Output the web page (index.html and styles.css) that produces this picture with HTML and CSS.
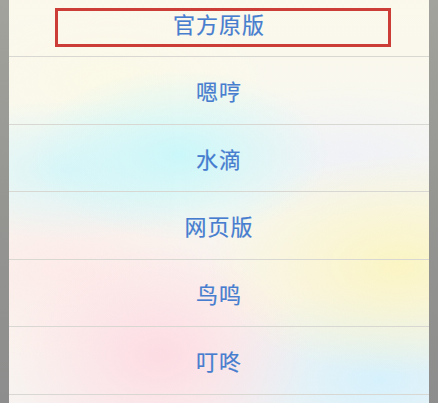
FILE: index.html
```html
<!DOCTYPE html>
<html lang="zh">
<head>
<meta charset="utf-8">
<link rel="stylesheet" href="styles.css">
</head>
<body>
<div class="screen">
  <div class="sheet">
    <div class="row">
      <span class="label">官方原版</span>
      <div class="highlight"></div>
    </div>
    <div class="row"><span class="label">嗯哼</span></div>
    <div class="row"><span class="label">水滴</span></div>
    <div class="row"><span class="label">网页版</span></div>
    <div class="row"><span class="label">鸟鸣</span></div>
    <div class="row"><span class="label">叮咚</span></div>
    <div class="row"><span class="label"></span></div>
  </div>
</div>
</body>
</html>
```
FILE: styles.css
```css
html, body {
  margin: 0;
  padding: 0;
}
body {
  width: 438px;
  height: 403px;
  overflow: hidden;
  background: linear-gradient(180deg, #a3a39d 0%, #959592 50%, #8d8d8d 100%);
  font-family: "Noto Sans CJK SC", "Noto Sans", sans-serif;
}
.screen {
  padding: 0 9px;
  height: 403px;
  overflow: hidden;
}
.sheet {
  margin-top: -10.5px;
  width: 420px;
  display: flex;
  flex-direction: column;
  background:
    radial-gradient(ellipse 150px 85px at 170px 165px, rgba(203, 247, 250, 1), rgba(203, 247, 250, 0) 100%),
    radial-gradient(ellipse 160px 70px at 60px 180px, rgba(215, 245, 248, 0.95), rgba(215, 245, 248, 0) 100%),
    radial-gradient(ellipse 190px 110px at 390px 275px, rgba(251, 245, 196, 1), rgba(251, 245, 196, 0) 100%),
    radial-gradient(ellipse 150px 110px at 150px 365px, rgba(253, 220, 228, 1), rgba(253, 220, 228, 0) 100%),
    radial-gradient(ellipse 190px 90px at 60px 280px, rgba(253, 234, 232, 0.95), rgba(253, 234, 232, 0) 100%),
    radial-gradient(ellipse 190px 100px at 370px 390px, rgba(214, 241, 252, 1), rgba(214, 241, 252, 0) 100%),
    radial-gradient(ellipse 180px 70px at 340px 165px, rgba(239, 241, 247, 0.95), rgba(239, 241, 247, 0) 100%),
    radial-gradient(ellipse 160px 70px at 100px 90px, rgba(251, 249, 230, 0.9), rgba(251, 249, 230, 0) 100%),
    linear-gradient(180deg, #fbf8eb 0%, #f9f8ef 25%, #f7f6f0 50%, #faf3ee 75%, #f4f2f2 100%);
}
.row {
  position: relative;
  height: 66.5px;
  border-bottom: 1px solid #d8d7d1;
  display: flex;
  align-items: center;
  justify-content: center;
}
.label {
  color: #467dcf;
  font-size: 22px;
  letter-spacing: 1px;
  line-height: 1;
  -webkit-text-stroke: 0.2px #467dcf;
}
.highlight {
  position: absolute;
  left: 46px;
  top: 18.5px;
  width: 330px;
  height: 33px;
  border: 3px solid #cc3d38;
}
```
